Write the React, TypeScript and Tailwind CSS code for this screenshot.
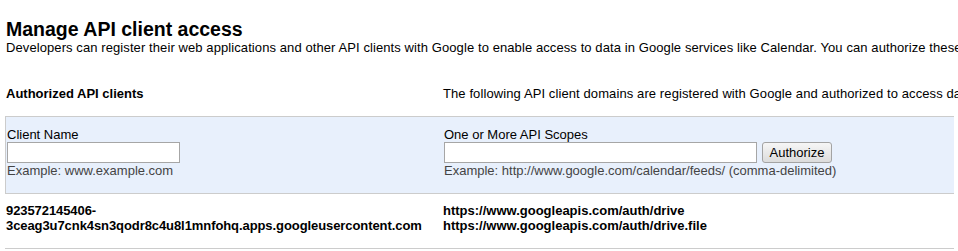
const clients = [
  {
    name: ["923572145406-", "3ceag3u7cnk4sn3qodr8c4u8l1mnfohq.apps.googleusercontent.com"],
    scopes: ["https://www.googleapis.com/auth/drive", "https://www.googleapis.com/auth/drive.file"],
  },
];

export default function App() {
  return (
    <div className="w-[958px] h-[251px] overflow-hidden bg-white text-black font-['Liberation_Sans',Arial,sans-serif] text-[13px] leading-[15px]">
      <div className="pl-[6px] pt-[18px]">
        <h2 className="text-[19.5px] leading-[22px] font-bold whitespace-nowrap">Manage API client access</h2>
        <p className="whitespace-nowrap tracking-[0.09px]">
          Developers can register their web applications and other API clients with Google to enable access to data in Google services like Calendar. You can authorize these clients here.
        </p>
      </div>

      <div className="flex mt-[31px] pl-[6px] whitespace-nowrap">
        <div className="w-[437px] shrink-0 font-bold">Authorized API clients</div>
        <div className="tracking-[0.1px]">The following API client domains are registered with Google and authorized to access data for your users.</div>
      </div>

      <div className="ml-[5px] w-[949px] mt-[15px]">
        {/* add form */}
        <div className="flex bg-[#e8f0fc] border-y border-l border-[#cccccc] pt-[10px] pb-[15px] pl-px">
          <div className="w-[437px] shrink-0">
            <div>Client Name</div>
            <input type="text" className="block w-[173px] h-[21px] bg-white border border-[#a6a6a6] outline-none" />
            <div className="text-[#444] whitespace-nowrap">Example: www.example.com</div>
          </div>
          <div>
            <div>One or More API Scopes</div>
            <div className="flex gap-[5px]">
              <input type="text" className="block w-[313px] h-[21px] bg-white border border-[#a6a6a6] outline-none" />
              <button className="w-[70px] h-[21px] rounded-[3px] border border-[#a3a3a3] bg-gradient-to-b from-[#f6f6f6] to-[#dcdcdc] text-[13px] leading-[19px] text-black">
                Authorize
              </button>
            </div>
            <div className="text-[#444] whitespace-nowrap">Example: http://www.google.com/calendar/feeds/ (comma-delimited)</div>
          </div>
        </div>

        {clients.map((c) => (
          <div key={c.name[1]} className="flex font-bold border-b border-[#cccccc] pt-[9px] pb-[15px] pl-px">
            <div className="w-[437px] shrink-0 tracking-[-0.08px]">
              {c.name.map((l) => (
                <div key={l}>{l}</div>
              ))}
            </div>
            <div>
              {c.scopes.map((s) => (
                <div key={s}>{s}</div>
              ))}
            </div>
          </div>
        ))}
      </div>
    </div>
  );
}
